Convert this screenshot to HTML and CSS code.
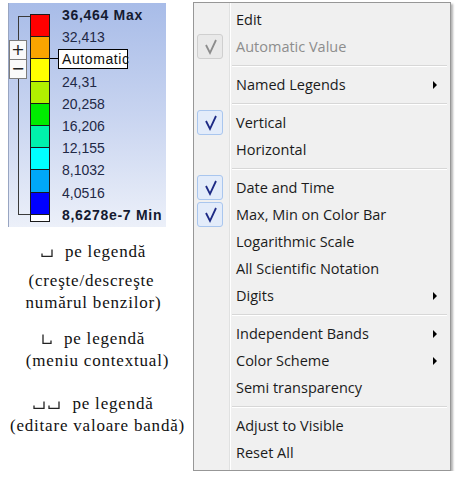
FILE: index.html
```html
<!DOCTYPE html>
<html>
<head>
<meta charset="utf-8">
<link rel="stylesheet" href="styles.css">
</head>
<body>
<div class="page">
  <div class="left">
    <div class="legend">
      <div class="bracket-area">
        <div class="bracket"></div>
        <div class="zoom-btns">
          <div class="zbtn">+</div>
          <div class="zbtn minus">−</div>
        </div>
      </div>
      <div class="bar">
        <div class="band c1"></div>
        <div class="band c2"></div>
        <div class="band c3"></div>
        <div class="band c4"></div>
        <div class="band c5"></div>
        <div class="band c6"></div>
        <div class="band c7"></div>
        <div class="band c8"></div>
        <div class="band c9"></div>
        <div class="band white"></div>
      </div>
      <div class="labels">
        <div class="lbl bold">36,464 Max</div>
        <div class="lbl">32,413</div>
        <div class="lbl"></div>
        <div class="lbl">24,31</div>
        <div class="lbl">20,258</div>
        <div class="lbl">16,206</div>
        <div class="lbl">12,155</div>
        <div class="lbl">8,1032</div>
        <div class="lbl">4,0516</div>
        <div class="lbl bold">8,6278e-7 Min</div>
      </div>
      <div class="marker"></div>
      <div class="tip">Automatic</div>
    </div>

    <div class="notes">
      <div class="note">
        <div class="note-title first"><svg class="click" width="12" height="8" viewBox="0 0 12 8"><path d="M1 4.5V7.3H11V0.5" fill="none" stroke="#222" stroke-width="1.3"/></svg>pe legendă</div>
        <div class="line l-a">(creşte/descreşte</div>
        <div class="line l-b">numărul benzilor)</div>
      </div>
      <div class="note second">
        <div class="note-title"><svg class="click" width="10" height="10" viewBox="0 0 10 10"><path d="M1 0.5V9.3H9V6.5" fill="none" stroke="#222" stroke-width="1.3"/></svg>pe legendă</div>
        <div class="line l-c">(meniu contextual)</div>
      </div>
      <div class="note third">
        <div class="note-title"><svg class="click dbl" width="12" height="8" viewBox="0 0 12 8"><path d="M1 4.5V7.3H11V0.5" fill="none" stroke="#222" stroke-width="1.3"/></svg><svg class="click" width="12" height="8" viewBox="0 0 12 8"><path d="M1 4.5V7.3H11V0.5" fill="none" stroke="#222" stroke-width="1.3"/></svg>pe legendă</div>
        <div class="line l-d">(editare valoare bandă)</div>
      </div>
    </div>
  </div>

  <div class="menu">
    <div class="item"><span class="check"></span><span class="text">Edit</span></div>
    <div class="item disabled"><span class="check on dis"><svg width="24" height="23" viewBox="0 0 24 23"><path d="M8 10L12 18L18 5" fill="none" stroke="#8c8c8c" stroke-width="1.8"/></svg></span><span class="text">Automatic Value</span></div>
    <div class="sep"></div>
    <div class="item"><span class="check"></span><span class="text">Named Legends</span><span class="arrow"></span></div>
    <div class="sep"></div>
    <div class="item"><span class="check on"><svg width="24" height="23" viewBox="0 0 24 23"><path d="M8 10L12 18L18 5" fill="none" stroke="#1d2a85" stroke-width="1.8"/></svg></span><span class="text">Vertical</span></div>
    <div class="item"><span class="check"></span><span class="text">Horizontal</span></div>
    <div class="sep"></div>
    <div class="item"><span class="check on"><svg width="24" height="23" viewBox="0 0 24 23"><path d="M8 10L12 18L18 5" fill="none" stroke="#1d2a85" stroke-width="1.8"/></svg></span><span class="text">Date and Time</span></div>
    <div class="item"><span class="check on"><svg width="24" height="23" viewBox="0 0 24 23"><path d="M8 10L12 18L18 5" fill="none" stroke="#1d2a85" stroke-width="1.8"/></svg></span><span class="text">Max, Min on Color Bar</span></div>
    <div class="item"><span class="check"></span><span class="text">Logarithmic Scale</span></div>
    <div class="item"><span class="check"></span><span class="text">All Scientific Notation</span></div>
    <div class="item"><span class="check"></span><span class="text">Digits</span><span class="arrow"></span></div>
    <div class="sep"></div>
    <div class="item"><span class="check"></span><span class="text">Independent Bands</span><span class="arrow"></span></div>
    <div class="item"><span class="check"></span><span class="text">Color Scheme</span><span class="arrow"></span></div>
    <div class="item"><span class="check"></span><span class="text">Semi transparency</span></div>
    <div class="sep"></div>
    <div class="item"><span class="check"></span><span class="text">Adjust to Visible</span></div>
    <div class="item"><span class="check"></span><span class="text">Reset All</span></div>
  </div>
</div>
</body>
</html>
```

FILE: styles.css
```css
body {
  margin: 0;
  background: #fff;
}

.page {
  display: flex;
  align-items: flex-start;
}

.left {
  width: 193px;
  flex: none;
}

/* ---------- colour legend ---------- */
.legend {
  position: relative;
  display: flex;
  align-items: flex-start;
  margin: 3px 0 0 8px;
  width: 158px;
  height: 224px;
  box-sizing: border-box;
  border-left: 1px solid #98a5c2;
  background: linear-gradient(#a8bce8, #c8d4f0 50%, #ecf0f9);
  font-family: "Liberation Sans", Arial, sans-serif;
}

.bracket-area {
  position: relative;
  width: 21px;
  flex: none;
}

.bracket {
  margin: 13px 0 0 9px;
  width: 12px;
  height: 199px;
  box-sizing: border-box;
  border: 1px solid #3a3a3a;
  border-right: none;
}

.zoom-btns {
  position: absolute;
  left: 0;
  top: 37px;
}

.zbtn {
  width: 18px;
  height: 20px;
  box-sizing: border-box;
  border: 1px solid #7d7d7d;
  background: #fafafa;
  display: flex;
  align-items: center;
  justify-content: center;
  font-family: "DejaVu Sans", sans-serif;
  font-size: 16px;
  line-height: 1;
  color: #222;
}

.zbtn.minus {
  margin-top: -1px;
}

.bar {
  margin-top: 11px;
  width: 20px;
  box-sizing: border-box;
  border: 1px solid #1a1a1a;
  flex: none;
}

.band {
  height: 22.2px;
  box-sizing: border-box;
  border-bottom: 1px solid #1a1a1a;
}

.c1 { background: #ff0000; }
.c2 { background: #f9a500; }
.c3 { background: #ffff00; }
.c4 { background: #b2f000; }
.c5 { background: #00ec00; }
.c6 { background: #00f2ac; }
.c7 { background: #00ffff; }
.c8 { background: #00a8f8; }
.c9 { background: #0000ff; }

.band.white {
  height: 6px;
  border-bottom: none;
  background: #fff;
}

.labels {
  margin: 1px 0 0 12px;
}

.lbl {
  height: 22.2px;
  line-height: 22.2px;
  font-size: 14px;
  color: #1f2946;
  white-space: nowrap;
}

.lbl.bold {
  font-weight: bold;
  letter-spacing: 0.7px;
  color: #141a30;
}

.marker {
  position: absolute;
  left: 41px;
  top: 55px;
  width: 8px;
  height: 1px;
  background: #000;
}

.tip {
  position: absolute;
  left: 49px;
  top: 46px;
  width: 70px;
  height: 20px;
  box-sizing: border-box;
  border: 1px solid #000;
  background: #fff;
  padding-left: 3px;
  font-size: 14px;
  line-height: 18px;
  letter-spacing: 0.6px;
  white-space: nowrap;
  color: #111;
}

/* ---------- notes ---------- */
.notes {
  margin-top: 14px;
  padding-right: 6px;
  text-align: center;
  font-family: "Liberation Serif", "Times New Roman", serif;
  font-size: 17px;
  letter-spacing: 0.8px;
  line-height: 22px;
  color: #111;
}

.note-title.first {
  margin-bottom: 7px;
}

.note.second {
  margin-top: 14px;
}

.note.third {
  margin-top: 21px;
}

.click {
  vertical-align: baseline;
  margin-right: 12px;
}

.click.dbl {
  margin-right: 3px;
}

.l-a { padding-right: 4px; }
.l-c { padding-left: 8px; }
.l-d { padding-left: 8px; }

/* ---------- context menu ---------- */
.menu {
  margin-top: 2px;
  width: 258px;
  box-sizing: border-box;
  border: 1px solid #979797;
  padding: 3px 0 4px 3px;
  background:
    linear-gradient(to right, transparent 35px, #e0e1e1 35px, #e0e1e1 36px, #ffffff 36px, #ffffff 37px, transparent 37px),
    #f0f0f0;
  box-shadow: 2px 2px 2px rgba(0, 0, 0, 0.3);
  font-family: "Open Sans", sans-serif;
  font-size: 14.5px;
  color: #1b1b1b;
}

.item {
  display: flex;
  align-items: center;
  height: 27px;
  padding-right: 13px;
  white-space: nowrap;
}

.check {
  width: 26px;
  height: 25px;
  box-sizing: border-box;
  flex: none;
  border-radius: 3px;
}

.check svg {
  display: block;
}

.check.on {
  border: 1px solid #a9c6ee;
  background: #e3ecfa;
}

.check.on.dis {
  border-color: #cfcfcf;
  background: #e9e9e9;
}

.text {
  margin-left: 13px;
}

.disabled .text {
  color: #8d8d8d;
}

.arrow {
  margin-left: auto;
  width: 0;
  height: 0;
  border-left: 4px solid #000;
  border-top: 4px solid transparent;
  border-bottom: 4px solid transparent;
}

.sep {
  margin: 5px 3px 4px 35px;
  border-top: 1px solid #d7d7d7;
  border-bottom: 1px solid #fff;
}
```
